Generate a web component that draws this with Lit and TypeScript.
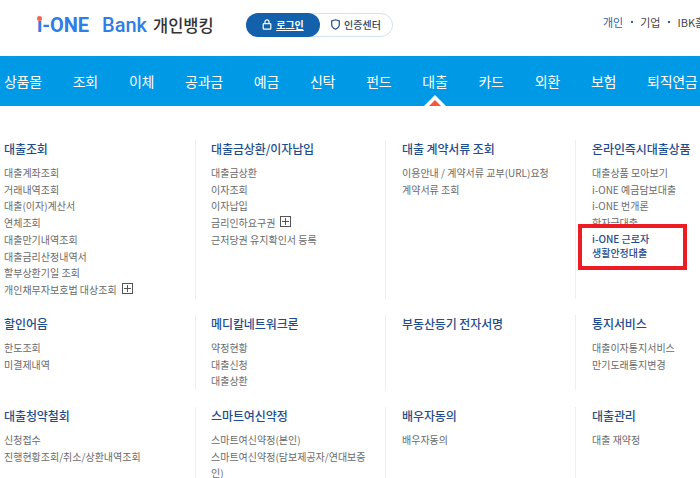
import { LitElement, html, css } from "lit";
import { customElement } from "lit/decorators.js";

type Sec = { t: string; items: (string | { s: string; plus?: boolean })[]; hi?: string[] };
const rows: { h: string; cols: Sec[] }[] = [
  { h: "row1", cols: [
    { t: "대출조회", items: ["대출계좌조회","거래내역조회","대출(이자)계산서","연체조회","대출만기내역조회","대출금리산정내역서","할부상환기일 조회",{ s: "개인채무자보호법 대상조회", plus: true }] },
    { t: "대출금상환/이자납입", items: ["대출금상환","이자조회","이자납입",{ s: "금리인하요구권", plus: true },"근저당권 유지확인서 등록"] },
    { t: "대출 계약서류 조회", items: ["이용안내 / 계약서류 교부(URL)요청","계약서류 조회"] },
    { t: "온라인즉시대출상품", items: ["대출상품 모아보기","i-ONE 예금담보대출","i-ONE 번개론","학자금대출"], hi: ["i-ONE 근로자", "생활안정대출"] },
  ]},
  { h: "row2", cols: [
    { t: "할인어음", items: ["한도조회","미결제내역"] },
    { t: "메디칼네트워크론", items: ["약정현황","대출신청","대출상환"] },
    { t: "부동산등기 전자서명", items: [] },
    { t: "통지서비스", items: ["대출이자통지서비스","만기도래통지변경"] },
  ]},
  { h: "row3", cols: [
    { t: "대출청약철회", items: ["신청접수","진행현황조회/취소/상환내역조회"] },
    { t: "스마트여신약정", items: ["스마트여신약정(본인)","스마트여신약정(담보제공자/연대보증인)"] },
    { t: "배우자동의", items: ["배우자동의"] },
    { t: "대출관리", items: ["대출 재약정"] },
  ]},
];
const nav = ["상품몰","조회","이체","공과금","예금","신탁","펀드","대출","카드","외환","보험","퇴직연금"];

@customElement("app-root")
export class AppRoot extends LitElement {
  static styles = css`
    :host { display: block; width: 700px; height: 478px; overflow: hidden; background: #fff; position: relative;
      font-family: "Noto Sans CJK KR", "Noto Sans", sans-serif; }
    .top { height: 56px; display: flex; align-items: center; white-space: nowrap; position: relative; }
    .logo { margin-left: 37px; display: flex; align-items: center; width: 209px; flex: none; margin-top: -6px; }
    .brand { font: 700 20px/24px "Roboto", "Noto Sans", sans-serif; color: #2f7de6; display: flex; align-items: center; }
    .brand b { font-weight: 700; position: relative; color: #2f7de6; width: 47px; letter-spacing: -0.1px; }
    .dot { position: absolute; left: 0; top: 3px; width: 5px; height: 5px; border-radius: 50%; background: #f2664e; }
    .bank { font-weight: 500; margin-left: 18px; width: 45px; }
    .kind { font-size: 16.5px; font-weight: 500; color: #333; margin-left: 6px; }
    .switch { display: flex; width: 145px; height: 22px; border: 1px solid #d5e2f1; border-radius: 12px; flex: none; margin-top: -7px; }
    .on { width: 74px; margin: -1px 0 -1px -1px; height: 24px; border-radius: 12px; background: #1360ab; color: #fff; font-size: 10px; font-weight: 700; display: flex; align-items: center; justify-content: center; gap: 4px; }
    .on u { text-decoration: underline; }
    .off { flex: 1; font-size: 10px; font-weight: 500; color: #33445a; display: flex; align-items: center; justify-content: center; gap: 4px; }
    .links { margin-left: 210px; font-size: 11px; color: #444; display: flex; align-items: center; gap: 7.5px; margin-top: -12px; }
    .links .cur { color: #2c5ea8; }
    .sep { width: 2px; height: 2px; background: #2c5ea8; }
    nav { height: 50px; background: #0099e6; display: flex; gap: 31px; padding-left: 4px; align-items: center; color: #fff; font-size: 14px; letter-spacing: -0.3px; white-space: nowrap; position: relative; overflow: hidden; box-sizing: border-box; }
    nav span { position: relative; }
    .ptr { position: absolute; left: 424px; bottom: 0; display: block; }
    .menu { padding-top: 34px; display: flex; flex-direction: column; gap: 21px; }
    .row { display: grid; grid-template-columns: 195px 190px 190px 125px; }
    .row.row1 { height: 154px; }
    .row.row2 { height: 71px; }
    .row.row3 { height: 71px; }
    .col { padding-left: 15px; border-left: 1px solid #eee; box-sizing: border-box; min-width: 0; }
    .col:first-child { padding-left: 4px; border-left: 0; }
    .col:nth-child(n + 3) { padding-left: 16px; }
    h3 { margin: 0 0 8px; font-size: 12px; line-height: 17px; font-weight: 500; color: #1f4d8c; white-space: nowrap; letter-spacing: -0.1px; }
    ul { list-style: none; margin: 0; padding: 0; max-width: 160px; }
    li { font-size: 10px; line-height: 16.7px; color: #6a6a6a; white-space: normal; }
    li.wrapfree { white-space: nowrap; }
    .hi { color: #1f4d8c; font-weight: 500; line-height: 14px; position: relative; margin-top: 0; white-space: nowrap; }
    .plus { display: inline-block; width: 9px; height: 9px; border: 1px solid #555; margin-left: 5px; vertical-align: 0; position: relative; }
    .plus::before { content: ""; position: absolute; left: 1px; right: 1px; top: 4px; height: 1px; background: #555; }
    .plus::after { content: ""; position: absolute; top: 1px; bottom: 1px; left: 4px; width: 1px; background: #555; }
    .box { position: absolute; left: -14px; top: -7.5px; width: 109px; height: 46px; border: 4px solid #ed1c24; box-sizing: border-box; }
  `;
  render() {
    return html`
      <div class="top">
        <div class="logo">
          <span class="brand"><b><span class="dot"></span>i-ONE</b><span class="bank">Bank</span></span>
          <span class="kind">개인뱅킹</span>
        </div>
        <div class="switch">
          <span class="on">
            <svg width="10" height="11" viewBox="0 0 10 11" fill="none" stroke="#fff" stroke-width="1.2"><rect x="1.2" y="4.6" width="7.6" height="5.6" rx=".8"/><path d="M3 4.6V2.8a2 2 0 0 1 4 0v1.8"/></svg>
            <u>로그인</u></span>
          <span class="off">
            <svg width="9" height="11" viewBox="0 0 9 11" fill="none" stroke="#1f4d8c" stroke-width="1.2"><path d="M4.500 .8 8.300 2v3.500c0 2.300-1.600 3.800-3.800 4.700C2.300 9.300.7 7.800.7 5.500V2z"/></svg>
            인증센터</span>
        </div>
        <div class="links"><span class="cur">개인</span><i class="sep"></i><span>기업</span><i class="sep"></i><span>IBK홈</span></div>
      </div>
      <nav>
        ${nav.map((n) => html`<span>${n}</span>`)}
        <svg class="ptr" width="22" height="11" viewBox="0 0 22 11"><path d="M11 0 22 11H0z" fill="#fff"/><path d="M11 5 17 11H5z" fill="#f2583e"/></svg>
      </nav>
      <div class="menu">
        ${rows.map((r) => html`<div class="row ${r.h}">
          ${r.cols.map((c) => html`<div class="col">
            <h3>${c.t}</h3>
            <ul>
              ${c.items.map((i) => typeof i === "string" ? html`<li>${i}</li>` : html`<li class="wrapfree">${i.s}<span class="plus"></span></li>`)}
              ${c.hi ? html`<li class="hi">${c.hi[0]}<br />${c.hi[1]}<span class="box"></span></li>` : ""}
            </ul>
          </div>`)}
        </div>`)}
      </div>
    `;
  }
}
